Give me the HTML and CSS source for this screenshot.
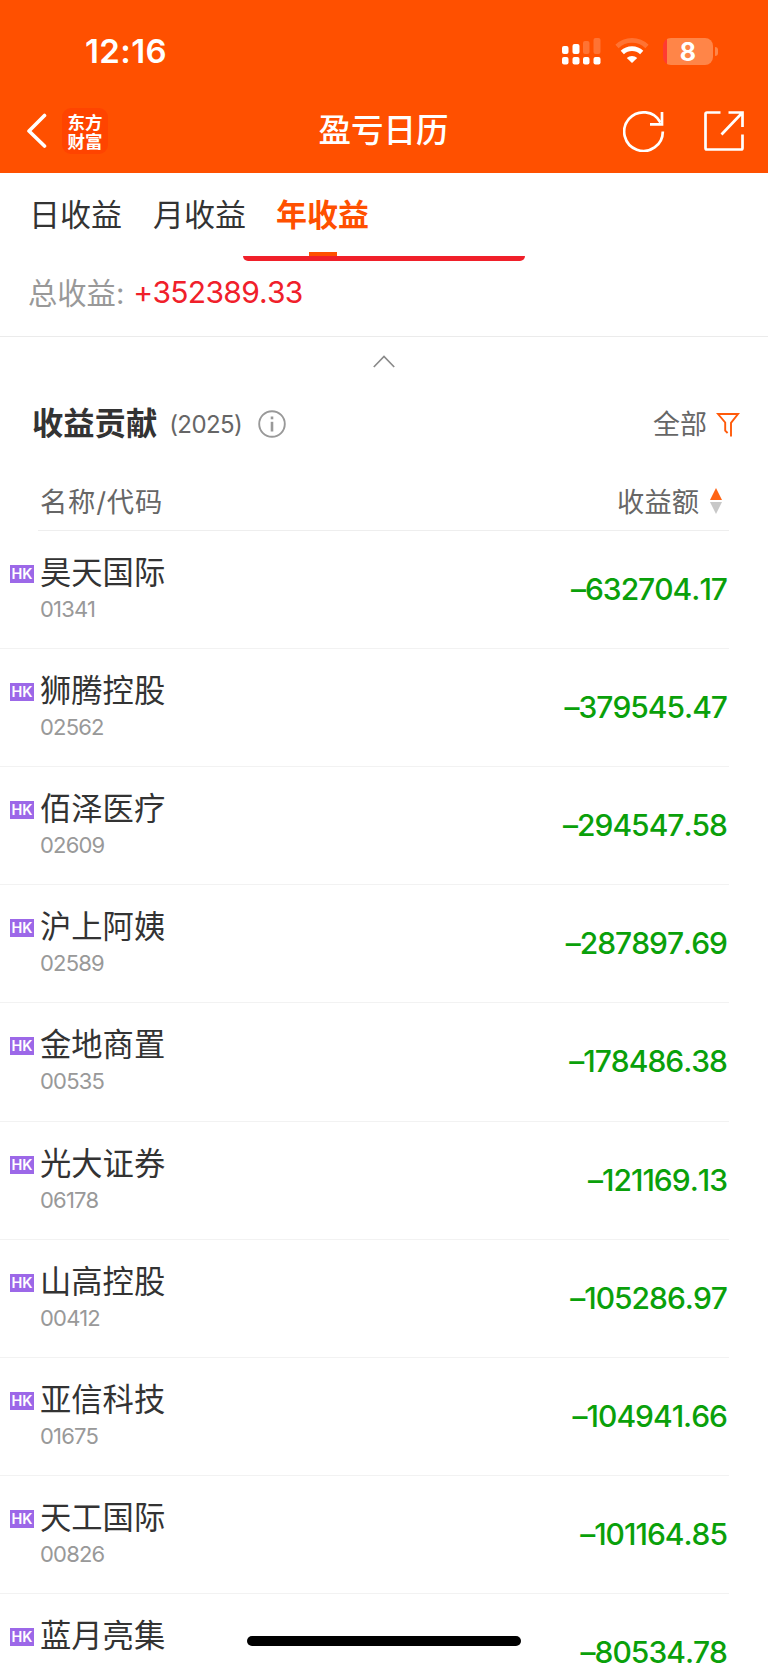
FILE: index.html
```
<!DOCTYPE html>
<html lang="zh-CN">
<head>
    <meta charset="UTF-8">
    <meta name="viewport" content="width=device-width, initial-scale=1.0">
    <title>盈亏日历</title>
    <link rel="stylesheet" href="styles.css">
</head>
<body>
    <header class="header">
        <div class="status-bar">
            <span class="time">12:16</span>
            <div class="status-icons">
                <svg class="signal" width="39" height="28" viewBox="0 0 39 28" fill="#fff">
                    <rect x="0" y="9" width="6.5" height="8" rx="2"/>
                    <rect x="10.5" y="7" width="7" height="10" rx="2"/>
                    <rect x="21" y="4" width="6.5" height="13" rx="2" opacity=".2"/>
                    <rect x="31.5" y="1" width="7" height="16" rx="2" opacity=".2"/>
                    <rect x="0" y="20" width="6.5" height="7.5" rx="2"/>
                    <rect x="10.5" y="20" width="7" height="7.5" rx="2"/>
                    <rect x="21" y="20" width="6.5" height="7.5" rx="2"/>
                    <rect x="31.5" y="20" width="7" height="7.5" rx="2"/>
                </svg>
                <svg class="wifi" width="34" height="26" viewBox="0 0 34 26" fill="none" stroke="#fff">
                    <path d="M2 8.500a21.5 21.5 0 0 1 30 0" stroke-width="4.6" opacity=".2"/>
                    <path d="M7.3 14.500a14 14 0 0 1 19.4 0" stroke-width="4.6"/>
                    <path d="M17 25l-5.200-5a7.500 7.500 0 0 1 10.400 0z" fill="#fff" stroke="none"/>
                </svg>
                <div class="battery"><span class="battery-level">8</span></div>
            </div>
        </div>
        <nav class="nav">
            <div class="nav-left">
                <svg width="20" height="36" viewBox="0 0 20 36" fill="none" stroke="#fff" stroke-width="3.6" stroke-linecap="round" stroke-linejoin="round">
                    <path d="M17.500 2.500L2 18l15.500 15"/>
                </svg>
                <div class="logo">东方<br>财富</div>
            </div>
            <h1 class="title">盈亏日历</h1>
            <div class="nav-right">
                <svg width="42" height="42" viewBox="0 0 42 42" fill="none" stroke="#fff" stroke-width="2.700">
                    <path d="M39.800 21.500A19.300 19.300 0 1 1 37.500 12.500"/>
                    <path d="M39 2v12.300H27"/>
                </svg>
                <svg width="40" height="40" viewBox="0 0 40 40" fill="none" stroke="#fff" stroke-width="2.700">
                    <path d="M16.500 1.500H3Q1.500 1.500 1.500 3v34q0 1.500 1.500 1.500h34q1.500 0 1.500-1.500V23.500"/>
                    <path d="M24.500 1.500h14V16M38 2L17.500 23.500"/>
                </svg>
            </div>
        </nav>
    </header>

    <div class="tabs">
        <span class="tab">日收益</span>
        <span class="tab">月收益</span>
        <span class="tab active">年收益</span>
        <div class="scroll-line"></div>
    </div>

    <div class="summary">
        <span class="summary-label">总收益:</span>
        <span class="summary-value">+352389.33</span>
    </div>

    <div class="collapse">
        <svg width="22" height="13" viewBox="0 0 22 13" fill="none" stroke="#8a8a8a" stroke-width="1.700">
            <path d="M.8 12L11 1.500 21.200 12"/>
        </svg>
    </div>

    <div class="section-head">
        <h2>收益贡献</h2>
        <span class="year">(2025)</span>
        <svg class="info" width="28" height="28" viewBox="0 0 28 28" fill="none" stroke="#999">
            <circle cx="14" cy="14" r="12.800" stroke-width="1.900"/>
            <path d="M14 11.800v9.700" stroke-width="2.600"/>
            <path d="M14 6.500v2.800" stroke-width="2.600"/>
        </svg>
        <div class="filter">
            <span>全部</span>
            <svg width="24" height="25" viewBox="0 0 24 25" fill="none" stroke="#ff5a0a" stroke-width="1.900">
                <path d="M15 24.500V10.800L22 2H2l7.200 8.500v8.200l2.400 2.300"/>
            </svg>
        </div>
    </div>

    <div class="table-head">
        <span class="col-name">名称/代码</span>
        <div class="sort">
            <span>收益额</span>
            <svg width="12" height="26" viewBox="0 0 12 26">
                <path d="M6 0l6 12H0z" fill="#ff6414"/>
                <path d="M6 26l6-12H0z" fill="#c8c8c8"/>
            </svg>
        </div>
    </div>

    <div class="list">
        <div class="row">
            <span class="market">HK</span>
            <div class="stock"><div class="name">昊天国际</div><div class="code">01341</div></div>
            <span class="amount">–632704.17</span>
        </div>
        <div class="row">
            <span class="market">HK</span>
            <div class="stock"><div class="name">狮腾控股</div><div class="code">02562</div></div>
            <span class="amount">–379545.47</span>
        </div>
        <div class="row">
            <span class="market">HK</span>
            <div class="stock"><div class="name">佰泽医疗</div><div class="code">02609</div></div>
            <span class="amount">–294547.58</span>
        </div>
        <div class="row">
            <span class="market">HK</span>
            <div class="stock"><div class="name">沪上阿姨</div><div class="code">02589</div></div>
            <span class="amount">–287897.69</span>
        </div>
        <div class="row">
            <span class="market">HK</span>
            <div class="stock"><div class="name">金地商置</div><div class="code">00535</div></div>
            <span class="amount">–178486.38</span>
        </div>
        <div class="row">
            <span class="market">HK</span>
            <div class="stock"><div class="name">光大证券</div><div class="code">06178</div></div>
            <span class="amount">–121169.13</span>
        </div>
        <div class="row">
            <span class="market">HK</span>
            <div class="stock"><div class="name">山高控股</div><div class="code">00412</div></div>
            <span class="amount">–105286.97</span>
        </div>
        <div class="row">
            <span class="market">HK</span>
            <div class="stock"><div class="name">亚信科技</div><div class="code">01675</div></div>
            <span class="amount">–104941.66</span>
        </div>
        <div class="row">
            <span class="market">HK</span>
            <div class="stock"><div class="name">天工国际</div><div class="code">00826</div></div>
            <span class="amount">–101164.85</span>
        </div>
        <div class="row">
            <span class="market">HK</span>
            <div class="stock"><div class="name">蓝月亮集</div></div>
            <span class="amount">–80534.78</span>
        </div>
    </div>
    <div class="home-indicator"></div>
</body>
</html>
```
FILE: styles.css
```
* {
    box-sizing: border-box;
}
body {
    margin: 0;
    height: 1663px;
    overflow: hidden;
    position: relative;
    background-color: #fff;
    color: #333;
    font-family: Inter, "Noto Sans CJK SC", sans-serif;
}
svg {
    display: block;
    flex: none;
}
h1, h2 {
    margin: 0;
}

/* header */
.header {
    height: 173px;
    background-color: #ff5000;
    color: #fff;
}
.status-bar {
    display: flex;
    align-items: center;
    justify-content: space-between;
    height: 89px;
    padding: 13px 50px 0 85px;
}
.time {
    font-size: 33px;
    font-weight: 600;
    letter-spacing: 0.4px;
}
.status-icons {
    display: flex;
    align-items: center;
}
.wifi {
    margin: 0 14px 0 14px;
}
.battery {
    position: relative;
    width: 50px;
    height: 27px;
    border-radius: 8px;
    background: linear-gradient(90deg, #ff3b30 4px, #ff8548 4px);
    text-align: center;
    margin-right: 5px;
}
.battery::after {
    content: "";
    position: absolute;
    right: -5px;
    top: 9px;
    width: 3px;
    height: 9px;
    border-radius: 0 4px 4px 0;
    background-color: #ff8548;
}
.battery-level {
    font-size: 25px;
    font-weight: 700;
    line-height: 28px;
}
.nav {
    display: grid;
    grid-template-columns: 1fr auto 1fr;
    align-items: center;
    height: 84px;
    padding: 0 24px 1px 27px;
}
.nav-left {
    display: flex;
    align-items: center;
    gap: 15px;
}
.logo {
    width: 46px;
    height: 46px;
    padding-top: 4px;
    border-radius: 9px;
    background-color: #ff4400;
    font-family: "Noto Sans CJK SC", sans-serif;
    font-size: 17.5px;
    font-weight: 700;
    line-height: 19px;
    text-align: center;
}
.title {
    margin-left: -4px;
    font-size: 32.5px;
    font-weight: 500;
    line-height: 48px;
}
.nav-right {
    display: flex;
    align-items: center;
    justify-content: flex-end;
    gap: 39px;
}

/* tabs */
.tabs {
    position: relative;
    display: flex;
    gap: 31px;
    height: 83px;
    padding-left: 29px;
}
.tab {
    height: 83px;
    font-size: 31px;
    line-height: 83px;
}
.tab.active {
    display: flex;
    flex-direction: column;
    align-items: center;
    margin-left: -1px;
    color: #ff5000;
    font-weight: 600;
}
.tab.active::after {
    content: "";
    width: 28px;
    height: 4px;
    margin-top: -4px;
    background-color: #ff5000;
}
.scroll-line {
    position: absolute;
    left: 243px;
    top: 83px;
    width: 282px;
    height: 5px;
    border-radius: 0 0 5px 5px;
    background-color: #f0202a;
}

.summary {
    display: flex;
    align-items: center;
    gap: 9px;
    height: 81px;
    padding: 0 0 8px 28px;
    border-bottom: 1px solid #ebebeb;
    font-size: 29.3px;
}
.summary-label {
    margin-top: -3px;
    color: #999;
}
.summary-value {
    color: #f0202a;
    font-size: 30px;
    font-kerning: none;
    letter-spacing: -0.7px;
}
.collapse {
    display: flex;
    justify-content: center;
    height: 50px;
    padding-top: 18px;
}

/* contribution section */
.section-head {
    display: flex;
    align-items: center;
    height: 74px;
    padding: 0 28px 0 32px;
}
.section-head h2 {
    font-size: 31.3px;
    font-weight: 700;
    line-height: 46px;
}
.year {
    margin-left: 12px;
    color: #666;
    font-size: 24px;
    letter-spacing: -0.6px;
}
.info {
    margin-left: 16px;
}
.filter {
    display: flex;
    align-items: center;
    gap: 9px;
    margin-left: auto;
    color: #666;
    font-size: 27px;
}
.filter span {
    margin-top: -4px;
}
.table-head {
    display: flex;
    align-items: center;
    justify-content: space-between;
    height: 70px;
    margin: 0 39px 0 38px;
    padding: 11px 7px 0 2px;
    border-bottom: 1px solid #eee;
    color: #666;
    font-size: 27.3px;
}
.table-head span {
    margin-top: -3px;
}
.col-name {
    letter-spacing: 0.8px;
}
.sort {
    display: flex;
    align-items: center;
    gap: 11px;
}
.row {
    display: flex;
    align-items: flex-start;
    height: 118.12px;
    margin-right: 39px;
    padding: 20px 2px 0 10px;
    border-bottom: 1px solid #f2f2f2;
}
.market {
    width: 24px;
    height: 18px;
    margin-top: 14px;
    background-color: #9c68e8;
    color: #fff;
    font-size: 14.5px;
    font-weight: 600;
    line-height: 18px;
    text-align: center;
}
.stock {
    margin-left: 6px;
}
.name {
    font-size: 31.3px;
    line-height: 44px;
}
.code {
    margin-top: 1px;
    color: #999;
    font-size: 22px;
    line-height: 26px;
    letter-spacing: -0.8px;
}
.amount {
    margin-left: auto;
    color: #0aa00a;
    font-size: 30px;
    font-weight: 500;
    font-kerning: none;
    line-height: 36px;
    letter-spacing: -1px;
    padding-top: 20px;
}
.home-indicator {
    position: absolute;
    left: 247px;
    bottom: 17px;
    width: 274px;
    height: 10px;
    border-radius: 5px;
    background-color: #000;
}
```
